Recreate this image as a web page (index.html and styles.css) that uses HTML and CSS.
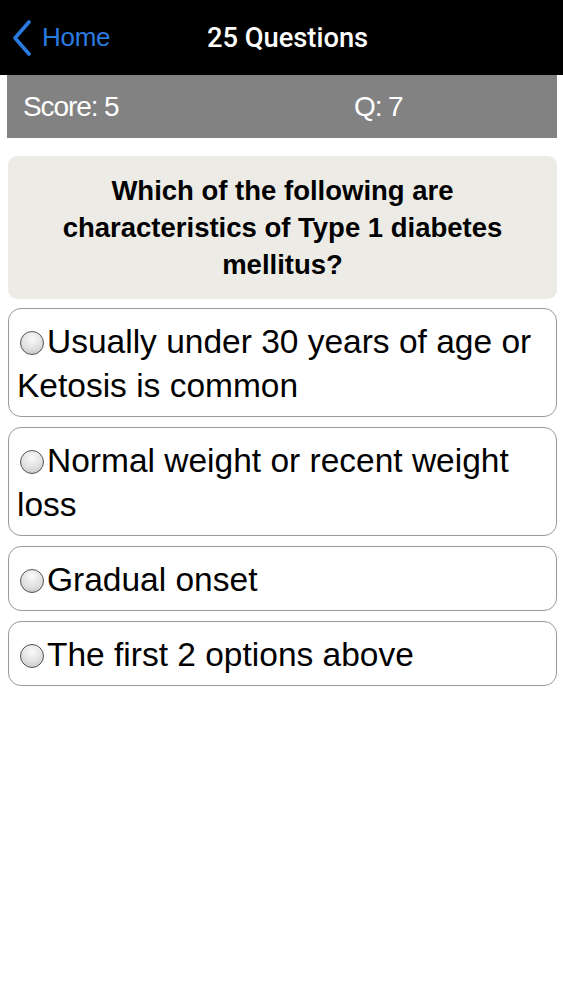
FILE: index.html
```html
<!DOCTYPE html>
<html>
<head>
<meta charset="utf-8">
<link rel="stylesheet" href="styles.css">
</head>
<body>
<header class="navbar">
  <a class="back">
    <svg class="chev" width="20" height="36" viewBox="0 0 20 36"><polyline points="17,2 3,18 17,34" fill="none" stroke="#2a7be0" stroke-width="3.6" stroke-linecap="round" stroke-linejoin="round"/></svg>
    <span class="back-label">Home</span>
  </a>
  <div class="title">25 Questions</div>
</header>
<div class="scorebar">
  <span class="score">Score: 5</span>
  <span class="qnum">Q: 7</span>
</div>
<div class="question">Which of the following are characteristics of Type 1 diabetes mellitus?</div>
<ul class="options">
  <li class="option"><span class="radio"></span>Usually under 30 years of age or Ketosis is common</li>
  <li class="option"><span class="radio"></span>Normal weight or recent weight loss</li>
  <li class="option"><span class="radio"></span>Gradual onset</li>
  <li class="option"><span class="radio"></span>The first 2 options above</li>
</ul>
</body>
</html>
```
FILE: styles.css
```css
html, body {
  margin: 0;
  padding: 0;
  background: #fff;
  font-family: "Liberation Sans", Arial, sans-serif;
}
.navbar {
  height: 75px;
  background: #000;
  display: flex;
  align-items: center;
  position: relative;
}
.back {
  display: flex;
  align-items: center;
  padding-left: 12px;
  color: #2a7be0;
  font-size: 26px;
  letter-spacing: -0.3px;
}
.chev {
  margin-right: 10px;
}
.title {
  position: absolute;
  left: 0;
  right: 0;
  text-align: center;
  color: #fff;
  font-family: Roboto, "Liberation Sans", sans-serif;
  font-size: 27.3px;
  font-weight: 500;
  padding-left: 12px;
  pointer-events: none;
}
.scorebar {
  margin: 0 6px 0 7px;
  height: 63px;
  background: #838283;
  display: flex;
  align-items: center;
  color: #fff;
  font-size: 28px;
  letter-spacing: -1.1px;
}
.score {
  padding-left: 16px;
  width: 331px;
}
.question {
  margin: 18px 6px 0 8px;
  min-height: 143px;
  box-sizing: border-box;
  background: #ecebe6;
  border-radius: 9px;
  text-align: center;
  font-weight: bold;
  font-size: 27.5px;
  line-height: 37px;
  padding: 16px 40px 16px 40px;
  color: #000;
}
.options {
  list-style: none;
  margin: 9px 6px 0 8px;
  padding: 0;
  display: flex;
  flex-direction: column;
  gap: 10px;
}
.option {
  border: 1px solid #9a9a9a;
  border-radius: 13px;
  padding: 11px 8px 8px 8px;
  font-size: 33.5px;
  line-height: 44px;
  color: #000;
}
.radio {
  display: inline-block;
  width: 24px;
  height: 24px;
  border-radius: 50%;
  border: 1.5px solid #555;
  background: radial-gradient(circle at 50% 30%, #fafafa 0%, #e0e0e0 55%, #bcbcbc 100%);
  box-sizing: border-box;
  margin-left: 3px;
  margin-right: 3px;
  vertical-align: -2px;
}
```
